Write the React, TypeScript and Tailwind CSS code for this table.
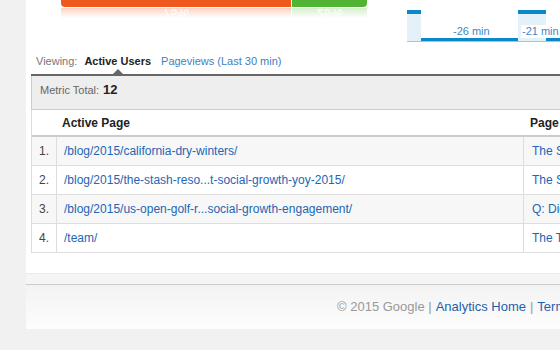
import React from "react";

const rows = [
  { n: "1.", page: "/blog/2015/california-dry-winters/", title: "The State of California Dry Winters" },
  { n: "2.", page: "/blog/2015/the-stash-reso...t-social-growth-yoy-2015/", title: "The Stash Resort Social Growth" },
  { n: "3.", page: "/blog/2015/us-open-golf-r...social-growth-engagement/", title: "Q: Did the US Open Golf" },
  { n: "4.", page: "/team/", title: "The Team" },
];

export default function App() {
  return (
    <div className="w-[560px] h-[350px] overflow-hidden bg-[#f1f1f1] font-['Liberation_Sans',Arial,sans-serif]">
      <div className="ml-[26px] w-[640px]">
        {/* white panel */}
        <div className="bg-white h-[273px]">
          {/* top area */}
          <div className="h-[46px] flex items-start overflow-hidden">
            <div className="ml-[35px] w-[306px] shrink-0 flex flex-col">
              <div className="flex mt-[-20px] h-[27px]">
                <div className="w-[230px] shrink-0 bg-[#f0591e] rounded-bl-[4px] flex items-end justify-center pb-[6px] text-white text-[13px] leading-[13px] font-bold">
                  75%
                </div>
                <div className="w-[1px] shrink-0 bg-white" />
                <div className="w-[75px] shrink-0 bg-[#52b435] rounded-br-[4px] flex items-end justify-center pb-[6px] text-white text-[13px] leading-[13px] font-bold">
                  25%
                </div>
              </div>
              <div className="flex mt-[1px] h-[10px]">
                <div className="w-[230px] shrink-0 bg-gradient-to-b from-[#fbd2c1] to-white flex items-start justify-center text-white text-[13px] leading-[13px] font-bold overflow-hidden">
                  <span className="scale-y-[-1] opacity-70 mt-[-1px]">75%</span>
                </div>
                <div className="w-[1px] shrink-0 bg-white" />
                <div className="w-[75px] shrink-0 bg-gradient-to-b from-[#d6eecd] to-white flex items-start justify-center text-white text-[13px] leading-[13px] font-bold overflow-hidden">
                  <span className="scale-y-[-1] opacity-70 mt-[-1px]">25%</span>
                </div>
              </div>
            </div>
            {/* mini chart */}
            <div className="ml-[40px] mt-[10px] relative flex items-end border-b border-[#bdbdbd] w-[200px] shrink-0">
              <div className="w-[14px] shrink-0 h-[31px] bg-[#e4f1f8] border-t-4 border-[#0b88c9]" />
              <div className="w-[97px] shrink-0 h-[3px] bg-[#0b88c9]" />
              <div className="w-[28px] shrink-0 h-[31px] bg-[#e4f1f8] border-t-4 border-[#0b88c9]" />
              <div className="flex-1 h-[3px] bg-[#0b88c9]" />
              <span className="absolute left-[46px] top-[15px] text-[11px] leading-[13px] text-[#3f87c4]">-26 min</span>
              <span className="absolute left-[114px] top-[15px] text-[11px] leading-[13px] text-[#3f87c4] bg-white px-[1px]">-21 min</span>
            </div>
          </div>

          {/* viewing row */}
          <div className="h-[28px] pl-[10px] pt-[8px] text-[11px] leading-[14px] flex whitespace-nowrap">
            <span className="text-[#777]">Viewing:</span>
            <span className="relative ml-[7px] font-bold text-[#222]">
              Active Users
              <span className="absolute left-1/2 -translate-x-1/2 top-[15px] w-0 h-0 border-l-[5px] border-r-[5px] border-b-[5px] border-l-transparent border-r-transparent border-b-[#666]" />
            </span>
            <span className="ml-[10px] text-[#3f7fc0]">Pageviews (Last 30 min)</span>
          </div>

          {/* table block */}
          <div className="ml-[5px] border-t-2 border-[#666]">
            <div className="h-[34px] bg-[#eeeeee] border-l border-b border-[#cccccc] pl-[8px] pt-[6px] flex items-baseline leading-[16px]">
              <span className="text-[11px] text-[#666]">Metric Total:</span>
              <span className="ml-[4px] text-[13px] font-bold text-[#222]">12</span>
            </div>
            <div className="h-[27px] border-l border-[#dddddd] border-b-2 border-b-[#cccccc] flex items-center text-[12px] font-bold text-[#222] whitespace-nowrap">
              <span className="ml-[30px] w-[468px] shrink-0">Active Page</span>
              <span>Page Title</span>
            </div>
            {rows.map((r, i) => (
              <div
                key={r.n}
                className={`h-[29px] flex border-l border-b border-[#dddddd] text-[12px] ${i % 2 === 0 ? "bg-[#f7f7f7]" : "bg-white"}`}
              >
                <div className="w-[25px] shrink-0 border-r border-[#dddddd] flex items-center justify-center text-[#444]">{r.n}</div>
                <div className="w-[467px] shrink-0 border-r border-[#dddddd] flex items-center pl-[7px] text-[#2366b5] whitespace-nowrap overflow-hidden">{r.page}</div>
                <div className="flex-1 min-w-0 flex items-center pl-[8px] text-[#2366b5] whitespace-nowrap">{r.title}</div>
              </div>
            ))}
          </div>
        </div>

        {/* footer */}
        <div className="h-[11px] bg-[#f5f5f5] border-t border-[#ececec]" />
        <div className="h-[45px] border-t border-[#cccccc] bg-gradient-to-b from-[#f3f3f3] to-[#fdfdfd] flex items-center pl-[311px] text-[13px] whitespace-nowrap">
          <span className="text-[#999]">© 2015 Google |</span>
          <span className="text-[#1f5fae] ml-[4px]">Analytics Home</span>
          <span className="text-[#999] ml-[4px]">|</span>
          <span className="text-[#1f5fae] ml-[4px]">Terms of Service</span>
        </div>
      </div>
    </div>
  );
}
